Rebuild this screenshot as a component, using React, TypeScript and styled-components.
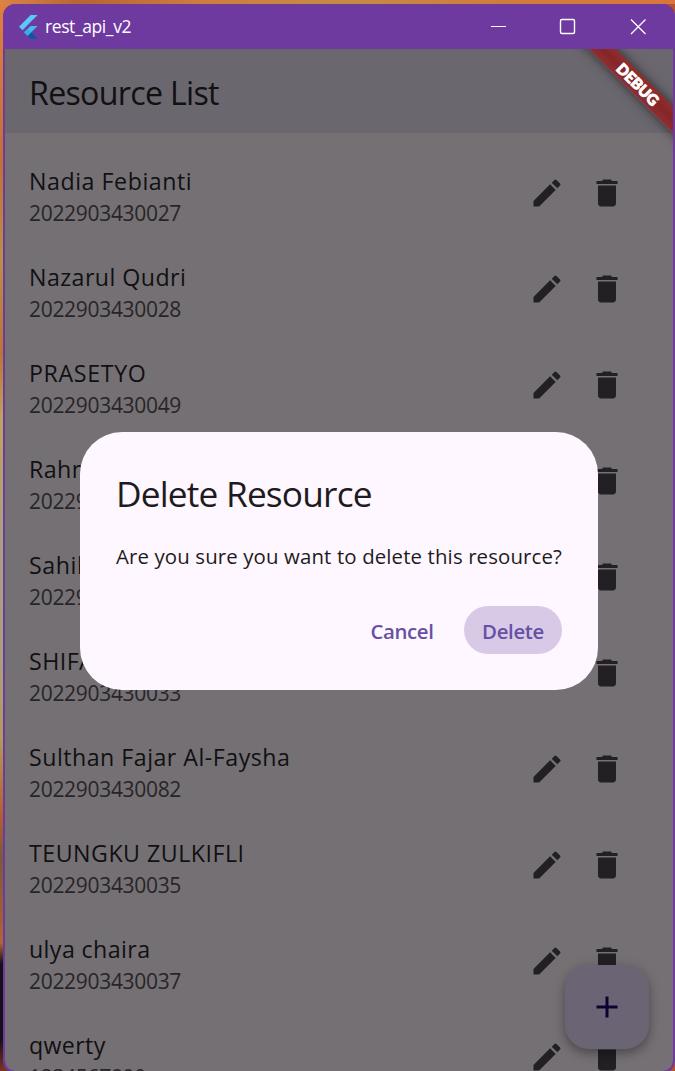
import React from "react";
import styled, { createGlobalStyle } from "styled-components";

const Global = createGlobalStyle`
  * { box-sizing: border-box; }
  html, body { margin: 0; height: 100%; overflow: hidden; }
  body { font-family: "Open Sans", "Noto Sans", sans-serif; font-weight: 400; }
`;

const Desktop = styled.div`
  width: 675px;
  height: 1071px;
  overflow: hidden;
  padding: 4px 0 0 3px;
  background:
    linear-gradient(90deg, #d98546 0, #b86434 12%, #cf7c3f 30%, #c58a45 50%, #cf7c3c 75%, #d9763a 100%) 0 0 / 100% 4px no-repeat,
    linear-gradient(180deg, #e07f40 0, #c07038 15%, #b89048 24%, #b97537 33%, #bda35c 39%, #a8a080 50%, #a8a07c 62%, #b09a5c 69%, #b3602f 76%, #7a5a3c 80%, #a25f35 86%, #b06636 88%, #15101a 90%, #15101a 97%, #7a3520 100%) 0 0 / 16px 100% no-repeat,
    #b5552b;
`;

const Window = styled.div`
  width: 672px;
  height: 1069px;
  display: flex;
  flex-direction: column;
  overflow: hidden;
  border: 2px solid #6e3a9f;
  border-top: 0;
  border-radius: 12px;
  background: #6e3a9f;
`;

const TitleBar = styled.header`
  flex: 0 0 45px;
  display: flex;
  align-items: center;
  padding-left: 14px;
  color: #fff;
  background: #6e3a9f;
`;

const WindowTitle = styled.span`
  flex: 1;
  margin-left: 7px;
  padding-bottom: 1px;
  font-size: 17.5px;
  letter-spacing: -0.4px;
  line-height: 24px;
`;

const Controls = styled.div`
  display: flex;
  svg { display: block; width: 70px; height: 45px; }
`;

const Client = styled.main`
  position: relative;
  flex: 1;
  min-height: 0;
  display: flex;
  flex-direction: column;
  overflow: hidden;
  border-radius: 0 0 10px 10px;
  background: #757073;
`;

const AppBar = styled.div`
  flex: 0 0 84px;
  display: flex;
  align-items: center;
  padding: 2px 24px 0;
  background: #6a676e;
  color: #111013;
  font-size: 32.2px;
  letter-spacing: -0.72px;
`;

const List = styled.ul`
  margin: 0;
  padding: 12px 0 0;
  list-style: none;
`;

const Row = styled.li`
  height: 96px;
  display: flex;
  align-items: center;
  padding: 0 36px 0 24px;
`;

const RowText = styled.div`
  flex: 1;
  padding-top: 8px;
  white-space: nowrap;
`;

const Name = styled.div<{ $tracking: number }>`
  font-size: 23.2px;
  line-height: 32px;
  letter-spacing: ${(p) => p.$tracking}px;
  color: #111013;
`;

const Code = styled.div`
  font-size: 21px;
  line-height: 32px;
  letter-spacing: -0.31px;
  color: #272529;
`;

const IconSlot = styled.span`
  width: 60px;
  display: flex;
  justify-content: center;
  svg { display: block; width: 36px; height: 36px; fill: #222024; }
`;

const Fab = styled.button`
  position: absolute;
  right: 24px;
  bottom: 22px;
  width: 84px;
  height: 84px;
  display: grid;
  place-items: center;
  padding: 0;
  border: 0;
  border-radius: 24px;
  background: #6b6475;
  box-shadow: 0 5px 8px rgba(0, 0, 0, 0.22), 0 2px 14px rgba(0, 0, 0, 0.16);
  svg { display: block; width: 36px; height: 36px; fill: #100030; }
`;

const DebugBanner = styled.div`
  position: absolute;
  top: 0;
  right: 0;
  width: 120px;
  height: 120px;
  overflow: hidden;
  pointer-events: none;
`;

const DebugRibbon = styled.div`
  position: absolute;
  top: 25.5px;
  left: 9.5px;
  width: 150px;
  height: 18.5px;
  transform: rotate(45deg);
  background: linear-gradient(#8f2e31, #842628 50%, #8f2e31);
  box-shadow: 0 0 12px rgba(0, 0, 0, 0.6);
  color: #fff;
  font: 900 15px/18px Lato, sans-serif;
  -webkit-text-stroke: 0.9px #fff;
  letter-spacing: 0.1px;
  text-align: center;
`;

const Dialog = styled.section`
  position: absolute;
  left: 75px;
  top: 383px;
  width: 518px;
  height: 258px;
  padding: 37px 36px 36px;
  display: flex;
  flex-direction: column;
  border-radius: 42px;
  background: #fef7ff;
  color: #1d1b20;
`;

const DialogTitle = styled.h1`
  margin: 0 0 24px;
  font-weight: 400;
  font-size: 35.3px;
  line-height: 48px;
  letter-spacing: -0.83px;
  white-space: nowrap;
`;

const DialogText = styled.p`
  margin: 0;
  font-size: 20.4px;
  line-height: 30px;
  letter-spacing: 0.13px;
  white-space: nowrap;
`;

const Actions = styled.div`
  margin-top: 35px;
  display: flex;
  justify-content: flex-end;
  gap: 12px;
`;

const TextButton = styled.button<{ $active?: boolean }>`
  height: 48px;
  width: ${(p) => (p.$active ? 98 : 100)}px;
  padding: 1px 0 0;
  border: 0;
  border-radius: 24px;
  background: ${(p) => (p.$active ? "#d8cae6" : "transparent")};
  color: #6750a4;
  font: 600 20.4px/30px "Open Sans", sans-serif;
  letter-spacing: -0.35px;
`;

const EditIcon = () => (
  <svg viewBox="0 0 24 24">
    <path d="M3 17.25V21h3.75L17.81 9.94l-3.75-3.75L3 17.25zM20.71 7.04a.996.996 0 0 0 0-1.41l-2.34-2.34a.996.996 0 0 0-1.41 0l-1.83 1.83 3.75 3.75 1.83-1.83z" />
  </svg>
);

const DeleteIcon = () => (
  <svg viewBox="0 0 24 24">
    <path d="M6 19c0 1.1.9 2 2 2h8c1.1 0 2-.9 2-2V7H6v12zM19 4h-3.500l-1-1h-5l-1 1H5v2h14V4z" />
  </svg>
);

const FlutterLogo = () => (
  <svg width="19" height="24" viewBox="0 0 19 24">
    <path d="M11.600 0H18.600L3.500 15.200 0 11.700z" fill="#5ac8f8" />
    <path d="M11.600 11H18.600L8.700 20.800 5.200 17.300z" fill="#47b9ef" />
    <path d="M8.700 20.800L12.300 17.300 18.600 23.800H11.600z" fill="#075a9f" />
    <path d="M5.200 17.300L8.700 13.800 12.300 17.300 8.700 20.800z" fill="#38adea" />
  </svg>
);

const people = [
  { name: "Nadia Febianti", code: "2022903430027", tracking: 0.55 },
  { name: "Nazarul Qudri", code: "2022903430028", tracking: 0.45 },
  { name: "PRASETYO", code: "2022903430049", tracking: 0.65 },
  { name: "Rahmat", code: "2022903430031", tracking: 0.45 },
  { name: "Sahil", code: "2022903430032", tracking: 0.6 },
  { name: "SHIFA", code: "2022903430033", tracking: 0.45 },
  { name: "Sulthan Fajar Al-Faysha", code: "2022903430082", tracking: 0.49 },
  { name: "TEUNGKU ZULKIFLI", code: "2022903430035", tracking: 0.5 },
  { name: "ulya chaira", code: "2022903430037", tracking: 0.4 },
  { name: "qwerty", code: "1234567890", tracking: 0.35 },
];

export default function App() {
  return (
    <Desktop>
      <Global />
      <Window>
        <TitleBar>
          <FlutterLogo />
          <WindowTitle>rest_api_v2</WindowTitle>
          <Controls>
            <svg viewBox="0 0 70 45" stroke="#fff" strokeWidth="1.2" fill="none">
              <path d="M28 22.500h15" />
            </svg>
            <svg viewBox="0 0 70 45" stroke="#fff" strokeWidth="1.4" fill="none">
              <rect x="27.500" y="15.500" width="14" height="14" rx="1.500" />
            </svg>
            <svg viewBox="0 0 70 45" stroke="#fff" strokeWidth="1.3" fill="none">
              <path d="M28 15.500l14.500 14.500M42.500 15.500L28 30" />
            </svg>
          </Controls>
        </TitleBar>
        <Client>
          <AppBar>Resource List</AppBar>
          <List>
            {people.map((p) => (
              <Row key={p.code}>
                <RowText>
                  <Name $tracking={p.tracking}>{p.name}</Name>
                  <Code>{p.code}</Code>
                </RowText>
                <IconSlot><EditIcon /></IconSlot>
                <IconSlot><DeleteIcon /></IconSlot>
              </Row>
            ))}
          </List>
          <Fab aria-label="Add">
            <svg viewBox="0 0 24 24"><path d="M19 13h-6v6h-2v-6H5v-2h6V5h2v6h6v2z" /></svg>
          </Fab>
          <DebugBanner><DebugRibbon>DEBUG</DebugRibbon></DebugBanner>
          <Dialog role="dialog">
            <DialogTitle>Delete Resource</DialogTitle>
            <DialogText>Are you sure you want to delete this resource?</DialogText>
            <Actions>
              <TextButton>Cancel</TextButton>
              <TextButton $active>Delete</TextButton>
            </Actions>
          </Dialog>
        </Client>
      </Window>
    </Desktop>
  );
}
